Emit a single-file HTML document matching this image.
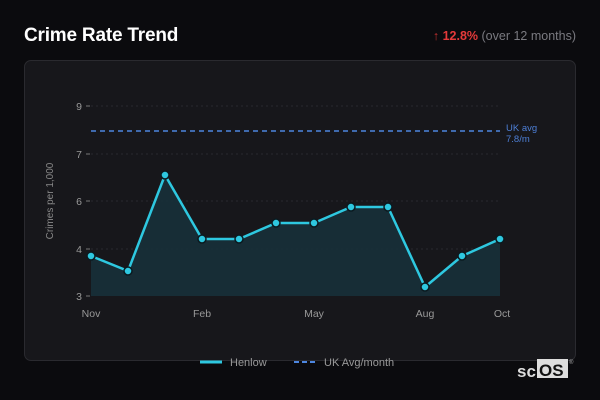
<!DOCTYPE html>
<html><head><style>
html,body{margin:0;padding:0;width:600px;height:400px;background:#0b0b0e;overflow:hidden;font-family:"Liberation Sans","DejaVu Sans",sans-serif}
.t{position:absolute;left:24px;top:25px;color:#fff;font-size:19px;font-weight:bold;letter-spacing:-0.2px}
.r{position:absolute;right:24px;top:29px;font-size:12.5px;color:#7a7a80}
.r b{color:#e53a3a}
.card{position:absolute;left:24px;top:60px;width:552px;height:301px;background:#17171b;border:1px solid #2a2a2f;border-radius:7px;box-sizing:border-box}
</style></head><body>
<div class="t">Crime Rate Trend</div>
<div class="r"><span style="color:#c0302f">↑</span> <b>12.8%</b> (over 12 months)</div>
<div class="card"></div>
<svg width="600" height="400" style="position:absolute;left:0;top:0" font-family="Liberation Sans, sans-serif">
<g stroke="#2a2a2f" stroke-dasharray="2 3" stroke-width="1">
<line x1="91" y1="106" x2="500" y2="106"/><line x1="91" y1="154" x2="500" y2="154"/><line x1="91" y1="201" x2="500" y2="201"/><line x1="91" y1="249" x2="500" y2="249"/>
</g>
<g stroke="#777" stroke-width="1"><line x1="86" y1="106" x2="90" y2="106"/><line x1="86" y1="154" x2="90" y2="154"/><line x1="86" y1="201" x2="90" y2="201"/><line x1="86" y1="249" x2="90" y2="249"/><line x1="86" y1="296" x2="90" y2="296"/></g>
<g fill="#999" font-size="10.5" text-anchor="end"><text x="82" y="110">9</text><text x="82" y="158">7</text><text x="82" y="205">6</text><text x="82" y="253">4</text><text x="82" y="300">3</text></g>
<text transform="translate(53,201) rotate(-90)" fill="#888" font-size="10" text-anchor="middle">Crimes per 1,000</text>
<polygon fill="#17303a" opacity="0.9" points="91,296 91,256 128,271 165,175 202,239 239,239 276,223 314,223 351,207 388,207 425,287 462,256 500,239 500,296"/>
<line x1="91" y1="131" x2="500" y2="131" stroke="#4d86e0" stroke-width="1.5" stroke-dasharray="5 4"/>
<text x="506" y="131" fill="#4d7fd6" font-size="9.5">UK avg</text><text x="506" y="142" fill="#4d7fd6" font-size="9.5">7.8/m</text>
<polyline fill="none" stroke="#2ec8e0" stroke-width="2.5" stroke-linejoin="round" points="91,256 128,271 165,175 202,239 239,239 276,223 314,223 351,207 388,207 425,287 462,256 500,239"/>
<g fill="#2ec8e0" stroke="#0b1a20" stroke-width="1.5">
<circle cx="91" cy="256" r="4"/><circle cx="128" cy="271" r="4"/><circle cx="165" cy="175" r="4"/><circle cx="202" cy="239" r="4"/><circle cx="239" cy="239" r="4"/><circle cx="276" cy="223" r="4"/><circle cx="314" cy="223" r="4"/><circle cx="351" cy="207" r="4"/><circle cx="388" cy="207" r="4"/><circle cx="425" cy="287" r="4"/><circle cx="462" cy="256" r="4"/><circle cx="500" cy="239" r="4"/>
</g>
<g fill="#999" font-size="10.5" text-anchor="middle"><text x="91" y="317">Nov</text><text x="202" y="317">Feb</text><text x="314" y="317">May</text><text x="425" y="317">Aug</text><text x="502" y="317">Oct</text></g>
<line x1="200" y1="362" x2="222" y2="362" stroke="#2ec8e0" stroke-width="3"/>
<text x="230" y="366" fill="#999" font-size="11">Henlow</text>
<line x1="294" y1="362" x2="316" y2="362" stroke="#4d86e0" stroke-width="2" stroke-dasharray="5 3"/>
<text x="324" y="366" fill="#999" font-size="11">UK Avg/month</text>
<text x="517" y="377" fill="#ddd" font-size="17" font-weight="bold">sc</text>
<rect x="537" y="359" width="31" height="19" fill="#ddd"/>
<text x="539" y="376" fill="#111" font-size="17" font-weight="bold">OS</text>
<text x="569" y="364" fill="#aaa" font-size="6">®</text>
</svg>
</body></html>
